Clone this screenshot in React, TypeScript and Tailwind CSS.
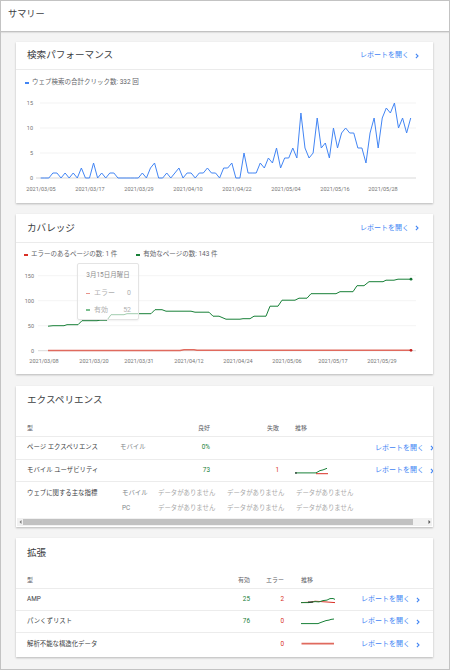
import React from "react";

const BLUE = "#4285f4";

const search = [0,0,0,1,1,0,1,0,1,0,2,0,0,3,0,1,0,1,1,0,0,0,0,0,0,1,0,2,3,0,0,1,0,1,2,0,1,1,0,1,1,2,1,1,0,2,2,3,0,0,5,1,1,1,3,2,4,3,6,2,4,4,6,4,13,6,4,5,12,6,7,4,10,6,9,10,9,9,6,6,3,9,12,6,12,14,13,15,10,12,9,12];

const searchPath = search
  .map((v, i) => `${i === 0 ? "M" : "L"}${(40.7 + i * 4.066).toFixed(2)} ${(178 - v * 5).toFixed(2)}`)
  .join(" ");

const greenPts: [number, number][] = [
  [48,49],[53,50],[64,50],[67,52],[78,52],[82,60],[97,60],[100,61],[107,61],[111,72],[124,72],[127,74],[151,74],[155,82],[162,82],[166,79],[191,79],[195,77],[209,77],[213,69],[219,69],[226,63],[240,63],[243,64],[250,64],[254,69],[266,69],[270,89],[278,89],[282,101],[295,101],[299,105],[307,105],[311,114],[336,114],[340,118],[353,118],[357,130],[364,130],[369,138],[383,138],[386,141],[394,141],[398,143],[411,143],
];
const redPts: [number, number][] = [[48,0.5],[180,0.5],[184,2],[194,2],[197,0.8],[411,0.8]];
const covY = (v: number) => 350.7 - v * 0.5;
const toPath = (pts: [number, number][]) =>
  pts.map(([x, v], i) => `${i === 0 ? "M" : "L"}${x} ${covY(v).toFixed(2)}`).join(" ");

const Chevron = () => (
  <svg width="4" height="6" viewBox="0 0 4 6" className="block">
    <path d="M0.9 0.9 L3 3 L0.9 5.1" fill="none" stroke={BLUE} strokeWidth="1.1" />
  </svg>
);

const Link = () => (
  <div className="flex items-center gap-[6px] text-[7px] text-[#4285f4] whitespace-nowrap">
    <span>レポートを開く</span>
    <Chevron />
  </div>
);

const Dash = ({ color }: { color: string }) => (
  <span className="inline-block w-[4px] h-[1.5px]" style={{ backgroundColor: color }} />
);

function SearchCard() {
  const yTicks = [15, 10, 5, 0];
  const xLabels: [string, number][] = [
    ["2021/03/05", 41], ["2021/03/17", 90], ["2021/03/29", 139], ["2021/04/10", 188],
    ["2021/04/22", 237], ["2021/05/04", 286], ["2021/05/16", 335], ["2021/05/28", 383],
  ];
  return (
    <div className="bg-white shadow-[0_1px_2px_rgba(0,0,0,0.25)] overflow-hidden">
      <div className="h-[28px] flex items-center justify-between pl-[11px] pr-[14px] border-b border-[#ebebeb]">
        <span className="text-[9.6px] text-[#3c4043]">検索パフォーマンス</span>
        <Link />
      </div>
      <div className="h-[26px] flex items-center pl-[9px] gap-[3px] text-[6.5px] text-[#5f6368]">
        <Dash color={BLUE} />
        <span>ウェブ検索の合計クリック数: 332 回</span>
      </div>
      <svg width="417" height="107" viewBox="16 96 417 107" className="block">
        {yTicks.map((t) => {
          const y = 178 - t * 5;
          return (
            <g key={t}>
              <line x1={t === 0 ? 36 : 40} x2={416} y1={y} y2={y} stroke={t === 0 ? "#cfcfcf" : "#f0f0f0"} strokeWidth="0.8" />
              <text x={33} y={y + 2} textAnchor="end" fontSize="5.5" fill="#757575">{t}</text>
            </g>
          );
        })}
        {xLabels.map(([l, x]) => (
          <text key={l} x={x} y={191} textAnchor="middle" fontSize="5.5" fill="#757575">{l}</text>
        ))}
        <path d={searchPath} fill="none" stroke={BLUE} strokeWidth="1" strokeLinejoin="round" />
      </svg>
    </div>
  );
}

function CoverageCard() {
  const yTicks = [150, 100, 50, 0];
  const xLabels: [string, number][] = [
    ["2021/03/08", 44], ["2021/03/20", 94], ["2021/03/31", 139], ["2021/04/12", 189],
    ["2021/04/24", 238], ["2021/05/06", 287], ["2021/05/17", 333], ["2021/05/29", 382],
  ];
  return (
    <div className="relative bg-white shadow-[0_1px_2px_rgba(0,0,0,0.25)] overflow-hidden">
      <div className="h-[29px] flex items-center justify-between pl-[11px] pr-[14px] border-b border-[#ebebeb]">
        <span className="text-[9.6px] text-[#3c4043]">カバレッジ</span>
        <Link />
      </div>
      <div className="h-[24px] flex items-center pl-[8px] text-[6.5px] text-[#5f6368]">
        <div className="flex items-center gap-[3px]">
          <Dash color="#d93025" />
          <span>エラーのあるページの数: 1 件</span>
        </div>
        <div className="flex items-center gap-[3px] ml-[19px]">
          <Dash color="#188038" />
          <span>有効なページの数: 143 件</span>
        </div>
      </div>
      <svg width="417" height="107" viewBox="16 267 417 107" className="block">
        {yTicks.map((t) => {
          const y = covY(t);
          return (
            <g key={t}>
              <line x1={38} x2={416} y1={y} y2={y} stroke={t === 0 ? "#cfcfcf" : "#f0f0f0"} strokeWidth="0.8" />
              <text x={34} y={y + 2} textAnchor="end" fontSize="5.5" fill="#757575">{t}</text>
            </g>
          );
        })}
        {xLabels.map(([l, x]) => (
          <text key={l} x={x} y={362.7} textAnchor="middle" fontSize="5.5" fill="#757575">{l}</text>
        ))}
        <path d={toPath(redPts)} fill="none" stroke="#e06a5e" strokeWidth="1.6" />
        <path d={toPath(greenPts)} fill="none" stroke="#188038" strokeWidth="1" />
        <circle cx={411} cy={covY(143)} r="1.4" fill="#137333" />
        <circle cx={411} cy={covY(0.8)} r="1.4" fill="#c5221f" />
      </svg>
      <div className="absolute left-[61px] top-[49px] w-[62px] h-[57px] bg-white/60 border border-[#e4e4e4] rounded-[2px] shadow-[0_1px_2px_rgba(0,0,0,0.06)] pt-[3px]">
        <div className="h-[18px] flex items-center justify-center text-[6.5px] text-[#8c8c8c]">3月15日月曜日</div>
        <div className="h-[16.5px] flex items-center pl-[8px] pr-[7px] text-[7px] text-[#b0b0b0]">
          <Dash color="#e8948b" />
          <span className="ml-[4px] flex-1">エラー</span>
          <span>0</span>
        </div>
        <div className="h-[16.5px] flex items-center pl-[8px] pr-[7px] text-[7px] text-[#b0b0b0]">
          <Dash color="#7bbf8f" />
          <span className="ml-[4px] flex-1">有効</span>
          <span>52</span>
        </div>
      </div>
    </div>
  );
}

const NoData = () => <span className="text-[#a8a8a8]">データがありません</span>;

function ExperienceCard() {
  return (
    <div className="mt-[1px] bg-white shadow-[0_1px_2px_rgba(0,0,0,0.25)] overflow-hidden pb-[1px]">
      <div className="h-[28px] flex items-center pl-[11px]">
        <span className="text-[9.6px] text-[#3c4043]">エクスペリエンス</span>
      </div>
      <div className="w-[600px]">
        <div className="h-[23px] pt-[5px] flex items-center pl-[11px] border-b border-[#ececec] text-[6px] text-[#5f6368]">
          <div className="w-[93px]">型</div>
          <div className="w-[36px]" />
          <div className="w-[56px] text-right pr-[2px]">良好</div>
          <div className="w-[69px] text-right pr-[2px]">失敗</div>
          <div className="w-[94px] pl-[14px]">推移</div>
        </div>
        <div className="h-[23px] flex items-center pl-[11px] border-b border-[#ececec] text-[6.4px]">
          <div className="w-[93px] text-[#3c4043]">ページ エクスペリエンス</div>
          <div className="w-[36px] text-[#80868b]">モバイル</div>
          <div className="w-[56px] text-right pr-[2px] text-[#188038]">0%</div>
          <div className="w-[69px]" />
          <div className="w-[94px]" />
          <Link />
        </div>
        <div className="h-[22px] flex items-center pl-[11px] border-b border-[#ececec] text-[6.4px]">
          <div className="w-[93px] text-[#3c4043]">モバイル ユーザビリティ</div>
          <div className="w-[36px]" />
          <div className="w-[56px] text-right pr-[2px] text-[#188038]">73</div>
          <div className="w-[69px] text-right pr-[2px] text-[#d93025]">1</div>
          <div className="w-[94px] pl-[14px]">
            <svg width="34" height="10" viewBox="0 0 34 10" className="block">
              <line x1="21" y1="7.7" x2="33" y2="7.7" stroke="#d93025" strokeWidth="1" />
              <polyline points="0,6.9 21,6.9 25,4.6 28,3.9 32,2.3" fill="none" stroke="#188038" strokeWidth="1" />
              <line x1="0" y1="7" x2="2" y2="7" stroke="#202124" strokeWidth="1.2" />
            </svg>
          </div>
          <Link />
        </div>
        <div className="h-[36px] flex items-start pt-[4px] pl-[11px] text-[6.4px] leading-[15px] whitespace-nowrap">
          <div className="w-[93px] text-[#3c4043]">ウェブに関する主な指標</div>
          <div className="w-[36px] pl-[2px] text-[#80868b] flex flex-col">
            <span>モバイル</span>
            <span>PC</span>
          </div>
          {[0, 1, 2].map((i) => (
            <div key={i} className="w-[69px] pl-[2px] flex flex-col">
              <NoData />
              <NoData />
            </div>
          ))}
        </div>
      </div>
      <div className="h-[8px] mx-[1px] flex items-center bg-[#f1f1f1]">
        <div className="w-[6px] flex justify-center">
          <svg width="3" height="4" viewBox="0 0 3 4" className="block"><path d="M2.5 0 L0.5 2 L2.5 4 Z" fill="#7a7a7a" /></svg>
        </div>
        <div className="w-[390px] h-[6px] bg-[#c1c1c1]" />
        <div className="flex-1" />
        <div className="w-[6px] flex justify-center">
          <svg width="3" height="4" viewBox="0 0 3 4" className="block"><path d="M0.5 0 L2.5 2 L0.5 4 Z" fill="#505050" /></svg>
        </div>
      </div>
    </div>
  );
}

function ExtRow({
  name, valid, error, spark, last,
}: { name: string; valid?: string; error: string; spark: React.ReactNode; last?: boolean }) {
  return (
    <div className={`${last ? "h-[23px]" : "h-[22px] border-b border-[#ececec]"} flex items-center pl-[11px] pr-[11px] text-[6.4px]`}>
      <div className="flex-1 text-[#3c4043]">{name}</div>
      <div className="w-[51px] text-right pr-[1px] text-[#188038]">{valid}</div>
      <div className="w-[50px] text-right pr-[17px] text-[#d93025]">{error}</div>
      <div className="w-[49px]">{spark}</div>
      <div className="w-[72px] flex justify-end pr-[2px]"><Link /></div>
    </div>
  );
}

function ExtensionCard() {
  return (
    <div className="bg-white shadow-[0_1px_2px_rgba(0,0,0,0.25)] overflow-hidden pb-[1px]">
      <div className="h-[30px] flex items-center pl-[11px]">
        <span className="text-[9.6px] text-[#3c4043]">拡張</span>
      </div>
      <div className="h-[21px] pt-[3px] flex items-center pl-[11px] pr-[11px] border-b border-[#ececec] text-[6px] text-[#5f6368]">
        <div className="flex-1">型</div>
        <div className="w-[51px] text-right pr-[1px]">有効</div>
        <div className="w-[50px] text-right pr-[17px]">エラー</div>
        <div className="w-[49px]">推移</div>
        <div className="w-[72px]" />
      </div>
      <ExtRow
        name="AMP"
        valid="25"
        error="2"
        spark={
          <svg width="34" height="10" viewBox="0 0 34 10" className="block">
            <polyline points="0,7.6 10,7.2 14,6.2 20,6.6 26,7 34,7.6" fill="none" stroke="#d93025" strokeWidth="1" />
            <polyline points="0,7.6 8,7.6 14,6.6 18,6.9 22,5.6 26,5.1 29,3.6 32,3.5 34,4.4" fill="none" stroke="#188038" strokeWidth="1" />
            <line x1="7" y1="7" x2="12" y2="7" stroke="#202124" strokeWidth="0.9" />
          </svg>
        }
      />
      <ExtRow
        name="パンくずリスト"
        valid="76"
        error="0"
        spark={
          <svg width="34" height="10" viewBox="0 0 34 10" className="block">
            <polyline points="0,6.6 17,6.6 20,5.4 25,3.6 28,3.1 30,2.4 33,2" fill="none" stroke="#188038" strokeWidth="1" />
          </svg>
        }
      />
      <ExtRow
        name="解析不能な構造化データ"
        error="0"
        last
        spark={
          <svg width="34" height="10" viewBox="0 0 34 10" className="block">
            <line x1="0.5" y1="3.6" x2="33" y2="3.6" stroke="#e06a5e" strokeWidth="1.6" />
          </svg>
        }
      />
    </div>
  );
}

export default function App() {
  return (
    <div className="w-[450px] h-[670px] overflow-hidden border border-[#c3c3c3] bg-[#f4f4f4] font-['Roboto','Noto_Sans_CJK_JP',sans-serif] flex flex-col">
      <div className="h-[31px] shrink-0 bg-white border-b border-[#c2c2c2] shadow-[0_1px_1px_rgba(0,0,0,0.08)] flex items-center pb-[4px] pl-[7px] text-[9.2px] text-[#3c4043]">
        サマリー
      </div>
      <div className="flex flex-col gap-[11px] pt-[10px] pl-[15px] pr-[16px]">
        <SearchCard />
        <CoverageCard />
        <ExperienceCard />
        <ExtensionCard />
      </div>
    </div>
  );
}
